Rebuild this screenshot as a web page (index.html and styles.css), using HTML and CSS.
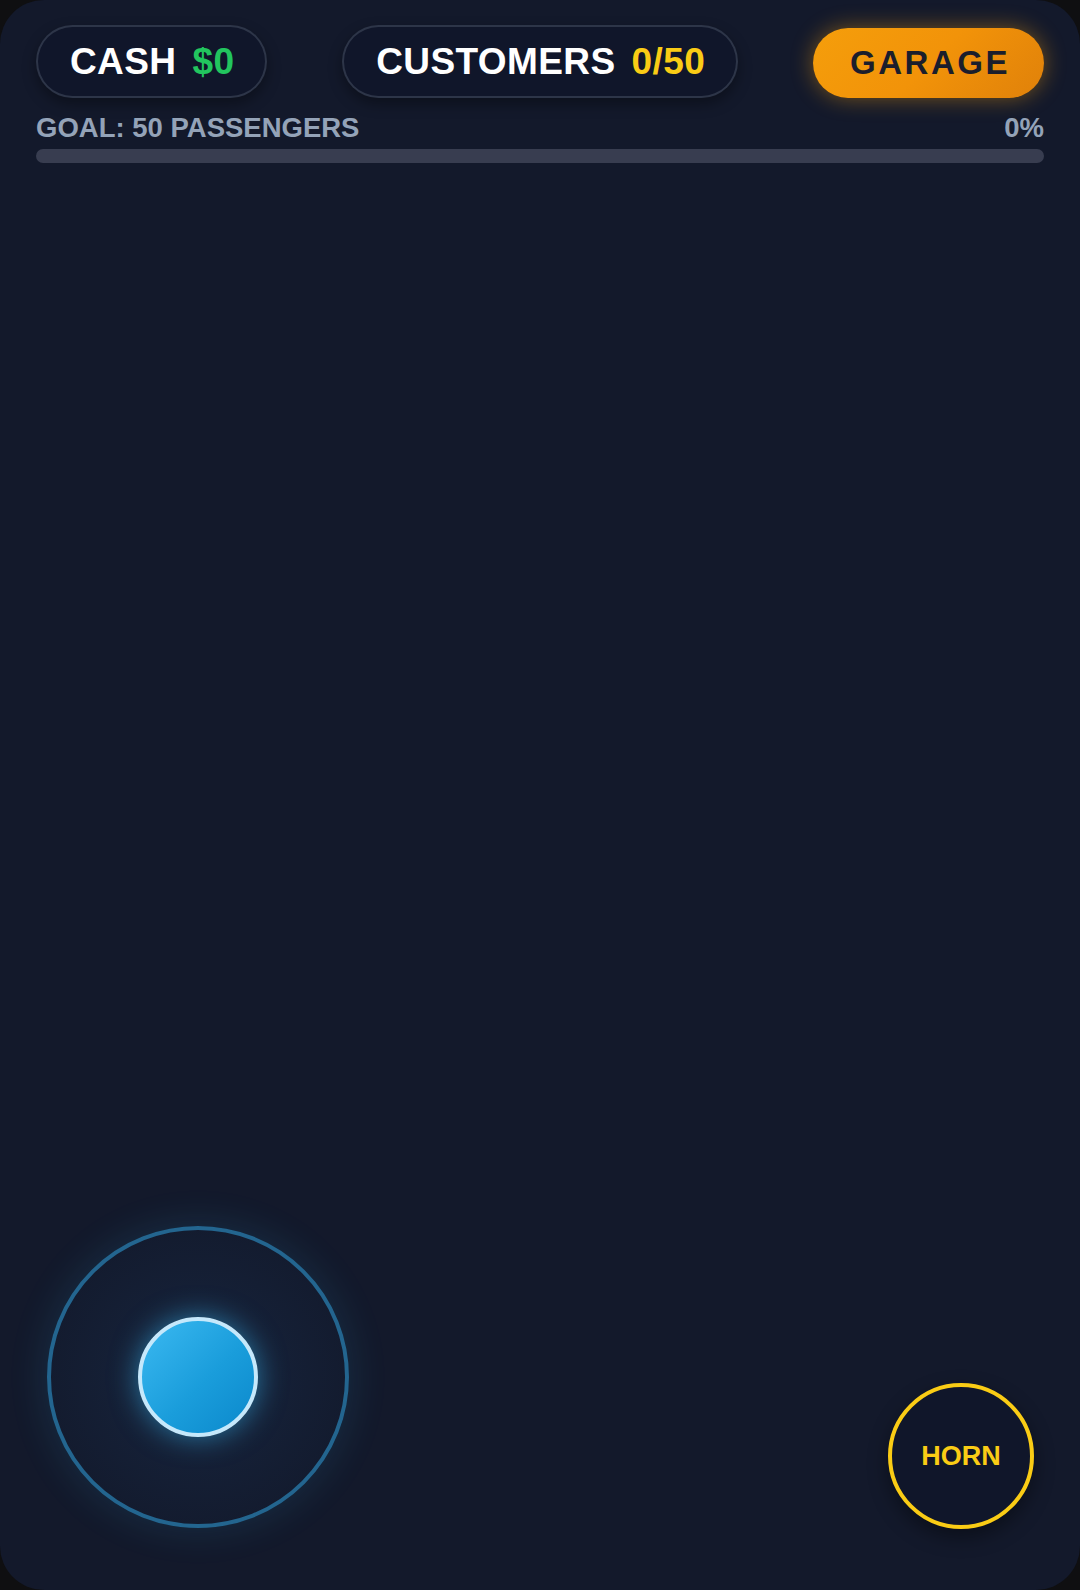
FILE: index.html
```html
<!DOCTYPE html>
<html lang="en">
<head>
<meta charset="utf-8">
<title>Taxi Game</title>
<link rel="stylesheet" href="styles.css">
</head>
<body>
<div class="app">
  <header class="hud">
    <div class="hud-row">
      <div class="pill"><span class="pill-label">CASH</span><span class="pill-value cash">$0</span></div>
      <div class="pill"><span class="pill-label">CUSTOMERS</span><span class="pill-value cust">0/50</span></div>
      <button class="garage">GARAGE</button>
    </div>
    <div class="goal-row">
      <span>GOAL: 50 PASSENGERS</span>
      <span>0%</span>
    </div>
    <div class="progress"><div class="progress-fill" style="width:0%"></div></div>
  </header>
  <div class="play"></div>
  <div class="controls">
    <div class="joystick"><div class="knob"></div></div>
    <button class="horn">HORN</button>
  </div>
</div>
</body>
</html>
```
FILE: styles.css
```css
* { box-sizing: border-box; }
html, body { margin: 0; padding: 0; }
body {
  background: #0f0f11;
  font-family: "Liberation Sans", Arial, sans-serif;
  width: 1080px;
  height: 1590px;
  overflow: hidden;
}
.app {
  width: 1080px;
  height: 1590px;
  background: #13192b;
  border-radius: 44px;
  display: flex;
  flex-direction: column;
  overflow: hidden;
}
.hud {
  padding: 25px 36px 0 36px;
}
.hud-row {
  display: flex;
  justify-content: space-between;
  align-items: center;
  height: 73px;
}
.pill {
  height: 73px;
  border: 2px solid rgba(148, 163, 184, 0.22);
  background: #10162a;
  border-radius: 40px;
  display: flex;
  align-items: center;
  gap: 16px;
  padding: 0 31px 0 32px;
  box-shadow: 0 6px 14px rgba(0, 0, 0, 0.35);
}
.pill-label {
  color: #ffffff;
  font-weight: 700;
  font-size: 37px;
  letter-spacing: 0.4px;
  line-height: 1;
}
.pill-value {
  font-weight: 700;
  font-size: 37px;
  letter-spacing: 0.4px;
  line-height: 1;
}
.cash { color: #22c55e; }
.cust { color: #facc15; }
.garage {
  width: 231px;
  height: 70px;
  margin-top: 3px;
  border: none;
  border-radius: 36px;
  background: linear-gradient(135deg, #f59e0b 0%, #f29309 50%, #e0810a 100%);
  color: #1b1e2c;
  font-family: "Liberation Sans", Arial, sans-serif;
  font-weight: 700;
  font-size: 33px;
  letter-spacing: 2.5px;
  padding: 0 0 0 3px;
  box-shadow: 0 0 22px rgba(245, 158, 11, 0.45);
}
.goal-row {
  margin-top: 16px;
  display: flex;
  justify-content: space-between;
  color: #94a3b8;
  font-weight: 700;
  font-size: 27.5px;
  line-height: 1;
}
.progress {
  margin-top: 7px;
  height: 14px;
  border-radius: 7px;
  background: #383d50;
  overflow: hidden;
}
.progress-fill {
  height: 100%;
  background: #facc15;
}
.play { flex: 1; }
.controls {
  display: flex;
  justify-content: space-between;
  align-items: flex-end;
  padding: 0 46px 61px 47px;
}
.joystick {
  width: 302px;
  height: 302px;
  margin-bottom: 1px;
  border-radius: 50%;
  border: 4px solid #23658f;
  background: radial-gradient(circle, rgba(30, 60, 100, 0.35) 0%, rgba(20, 35, 60, 0.25) 70%, rgba(20, 35, 60, 0.15) 100%);
  box-shadow: 0 0 40px rgba(56, 189, 248, 0.14);
  display: flex;
  align-items: center;
  justify-content: center;
}
.knob {
  width: 120px;
  height: 120px;
  border-radius: 50%;
  border: 4px solid #c5e8fb;
  background: linear-gradient(135deg, #3bb9f1 0%, #1a9ddb 55%, #0b88cb 100%);
  box-shadow: 0 0 28px rgba(56, 189, 248, 0.55);
}
.horn {
  width: 146px;
  height: 146px;
  border-radius: 50%;
  border: 4px solid #facc15;
  background: #10162a;
  color: #facc15;
  font-family: "Liberation Sans", Arial, sans-serif;
  font-weight: 700;
  font-size: 27px;
  padding: 0;
  box-shadow: 0 8px 20px rgba(0, 0, 0, 0.4);
}
```
